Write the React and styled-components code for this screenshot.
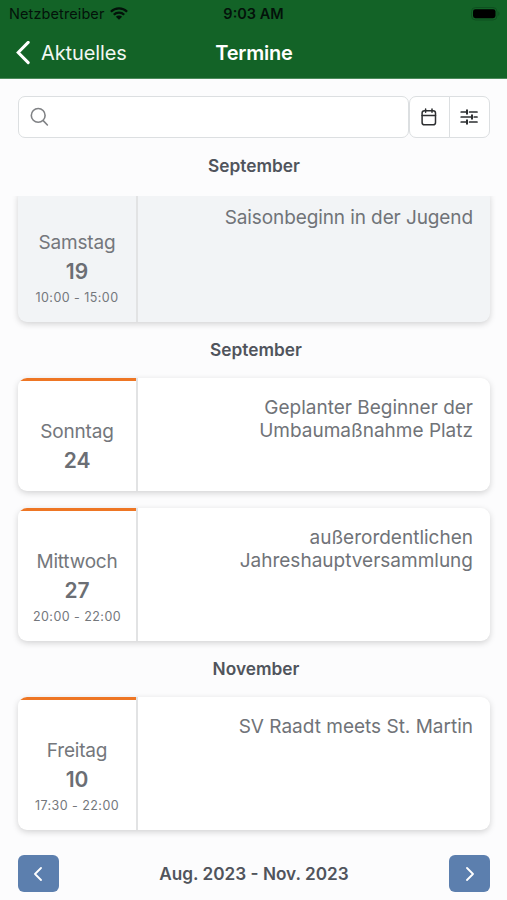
import styled, { createGlobalStyle } from "styled-components";

const events = [
    {
        month: "September",
        items: [
            { weekday: "Samstag", day: "19", time: "10:00 - 15:00", title: "Saisonbeginn in der Jugend", past: true },
        ],
    },
    {
        month: "September",
        items: [
            { weekday: "Sonntag", day: "24", title: "Geplanter Beginner der Umbaumaßnahme Platz" },
            { weekday: "Mittwoch", day: "27", time: "20:00 - 22:00", title: "außerordentlichen Jahreshauptversammlung" },
        ],
    },
    {
        month: "November",
        items: [
            { weekday: "Freitag", day: "10", time: "17:30 - 22:00", title: "SV Raadt meets St. Martin" },
        ],
    },
];

const App = () => {
    return (
    <Screen>
        <GlobalStyle />
        <Header>
            <StatusBar>
                <Carrier>
                    Netzbetreiber
                    <WifiIcon />
                </Carrier>
                <Clock>9:03 AM</Clock>
                <BatteryIcon />
            </StatusBar>
            <NavBar>
                <Back>
                    <svg width="14" height="24" viewBox="0 0 14 24" fill="none" stroke="#fff" strokeWidth="3" strokeLinecap="round">
                        <path d="M12.2 1.4 2.2 11.500l10 10.100" />
                    </svg>
                    Aktuelles
                </Back>
                <Title>Termine</Title>
            </NavBar>
        </Header>

        <Toolbar>
            <Search>
                <svg width="20" height="20" viewBox="0 0 20 20" fill="none" stroke="#808285" strokeWidth="1.6" strokeLinecap="round">
                    <circle cx="8.2" cy="8.4" r="6.9" />
                    <path d="m13.2 13.6 4.2 4.4" />
                </svg>
                <SearchInput type="text" aria-label="Suche" />
            </Search>
            <ToolButton aria-label="Kalender">
                <CalendarIcon />
            </ToolButton>
            <ToolButton $last aria-label="Filter">
                <FilterIcon />
            </ToolButton>
        </Toolbar>

        {events.map((group, i) => (
            <Group key={i}>
                <Month $sticky={i === 0}>{group.month}</Month>
                <Cards>
                    {group.items.map((item) => (
                        <Card key={item.day} $past={item.past}>
                            <DateCol $past={item.past}>
                                <Weekday>{item.weekday}</Weekday>
                                <Day>{item.day}</Day>
                                {item.time && <Time>{item.time}</Time>}
                            </DateCol>
                            <Info>
                                <EventTitle $past={item.past}>{item.title}</EventTitle>
                            </Info>
                        </Card>
                    ))}
                </Cards>
            </Group>
        ))}

        <Footer>
            <PageButton aria-label="Zurück">
                <svg width="8" height="14" viewBox="0 0 8 14" fill="none" stroke="#fff" strokeWidth="1.8" strokeLinecap="round" strokeLinejoin="round">
                    <path d="M7 1 1 7l6 6" />
                </svg>
            </PageButton>
            <Range>Aug. 2023 - Nov. 2023</Range>
            <PageButton $next aria-label="Weiter">
                <svg width="8" height="14" viewBox="0 0 8 14" fill="none" stroke="#fff" strokeWidth="1.8" strokeLinecap="round" strokeLinejoin="round">
                    <path d="m1 1 6 6-6 6" />
                </svg>
            </PageButton>
        </Footer>
    </Screen>
    );
}

const WifiIcon = () => (
    <svg width="18" height="13" viewBox="0 0 18 13" fill="none" stroke="#03120a" strokeWidth="2.3">
        <path d="M.9 4.7a11.6 11.6 0 0 1 16.2 0" />
        <path d="M3.8 7.8a7.4 7.4 0 0 1 10.4 0" />
        <path d="M9 12.7 5.9 9.7a4.4 4.4 0 0 1 6.2 0z" fill="#03120a" stroke="none" />
    </svg>
)

const BatteryIcon = () => (
    <svg width="29" height="14" viewBox="0 0 29 14">
        <rect x=".5" y=".5" width="25.5" height="12.5" rx="4" fill="none" stroke="#0e5120" />
        <rect x="2" y="2.2" width="22.5" height="9" rx="2.4" fill="#000" />
        <path d="M27.3 4.6c1.5.7 1.5 3.6 0 4.3z" fill="#0e5120" />
    </svg>
)

const CalendarIcon = () => (
    <svg width="16" height="18" viewBox="0 0 16 18" fill="none" stroke="#2d2f31" strokeWidth="1.5" strokeLinecap="round">
        <rect x="1.1" y="2.7" width="13.4" height="14.1" rx="2.4" />
        <path d="M1.1 7.5h13.4M4.6.9v3.4M11 .9v3.4" />
    </svg>
)

const FilterIcon = () => (
    <svg width="18" height="16" viewBox="0 0 18 16" fill="none" stroke="#2d2f31" strokeWidth="1.7" strokeLinecap="round">
        <path d="M1.2 3h5.4M9.6 3H17M1.2 8h10.2M14.2 8H17M1.2 13h5.4M9.6 13H17" />
        <path d="M7 1.3v3.4M12 6.3v3.4M7 11.3v3.4" strokeWidth="2" />
    </svg>
)

const GlobalStyle = createGlobalStyle`
* {
box-sizing: border-box;
}
body {
margin: 0;
background: #fcfcfd;
font-family: Inter, "Liberation Sans", sans-serif;
}
`;
const Screen = styled.div`
display: flex;
flex-direction: column;
width: 507px;
height: 900px;
overflow: hidden;
background: #fcfcfd;
`;
const Header = styled.header`
height: 79px;
flex: none;
background: #136327;
border-bottom: 1px solid #4c8a5b;
`;
const StatusBar = styled.div`
display: grid;
grid-template-columns: 1fr auto 1fr;
align-items: center;
height: 27px;
padding: 0 7px 0 9px;
color: #03120a;
font-size: 14.5px;

> :last-child {
    justify-self: end;
}
`;
const Carrier = styled.div`
display: flex;
align-items: center;
gap: 6px;
letter-spacing: 0.1px;
`;
const Clock = styled.div`
margin-right: 2px;
font-size: 14.5px;
font-weight: 600;
`;
const NavBar = styled.div`
display: grid;
grid-template-columns: 1fr auto 1fr;
align-items: center;
height: 51px;
padding: 0 17px 0 16px;
color: #fff;
`;
const Back = styled.a`
display: flex;
align-items: center;
gap: 11px;
font-size: 20px;
letter-spacing: -0.1px;
color: #f2f8f2;
`;
const Title = styled.h1`
margin: 0 0 0 2px;
font-size: 20px;
font-weight: 600;
letter-spacing: -0.2px;
`;
const Toolbar = styled.div`
display: flex;
flex: none;
height: 42px;
margin: 17px 17px 0 18px;
`;
const Search = styled.label`
display: flex;
align-items: center;
flex: 1;
padding-left: 11px;
border: 1.5px solid #dcdfe1;
border-radius: 7px;
background: #fff;
`;
const SearchInput = styled.input`
flex: 1;
min-width: 0;
border: 0;
outline: 0;
background: none;
font: inherit;
`;
const ToolButton = styled.button`
display: flex;
align-items: center;
justify-content: center;
width: 41px;
padding: 0 ${(props) => (props.$last ? "2px" : "1px")} 0 0;
margin-left: ${(props) => (props.$last ? "-1px" : "0")};
border: 1.5px solid #dcdfe1;
border-radius: ${(props) => (props.$last ? "0 7px 7px 0" : "7px 0 0 7px")};
background: #fff;
`;
const Group = styled.section`
flex: none;
`;
const Month = styled.h2`
display: flex;
align-items: center;
justify-content: center;
height: 56px;
margin: 0;
padding: 0 0 1px ${(props) => (props.$sticky ? "1px" : "5px")};
font-size: 17.3px;
font-weight: 600;
color: #50545c;
`;
const Cards = styled.div`
display: flex;
flex-direction: column;
gap: 17px;
padding: 0 17px 0 18px;
`;
// past entries are scrolled slightly under the sticky month label
const Card = styled.article`
display: flex;
min-height: 113px;
margin-top: ${(props) => (props.$past ? "-5px" : "0")};
border-radius: 9px;
background: ${(props) => (props.$past ? "#f2f4f6" : "#fff")};
box-shadow: 0 2px 6px rgba(0, 0, 0, 0.17);
clip-path: ${(props) => (props.$past ? "inset(7px -16px -16px)" : "none")};
overflow: hidden;
`;
const DateCol = styled.div`
display: flex;
flex-direction: column;
align-items: center;
width: 118px;
padding: 36px 0 12px;
border-top: 3px solid ${(props) => (props.$past ? "transparent" : "#ee7624")};
color: #74777c;
`;
const Weekday = styled.div`
font-size: 19px;
line-height: 29px;
letter-spacing: -0.2px;
`;
const Day = styled.div`
font-size: 21px;
font-weight: 600;
line-height: 29px;
color: #6b6e74;
`;
const Time = styled.div`
font-size: 12.5px;
line-height: 24px;
letter-spacing: 0.45px;
`;
const Info = styled.div`
flex: 1;
padding: 18px 17px 0 70px;
border-left: 2px solid #e2e3e4;
text-align: right;
`;
const EventTitle = styled.p`
margin: ${(props) => (props.$past ? "-1px 0 0" : "0")};
font-size: 19px;
line-height: 23px;
letter-spacing: ${(props) => (props.$past ? "-0.1px" : "0")};
color: #707378;
`;
const Footer = styled.footer`
display: flex;
align-items: center;
justify-content: space-between;
margin: 25px 17px 0 18px;
`;
const PageButton = styled.button`
display: flex;
align-items: center;
justify-content: center;
width: 41px;
height: 37px;
padding: ${(props) => (props.$next ? "0 0 0 1px" : "0 2px 0 0")};
border: 0;
border-radius: 6px;
background: #5c7fae;
`;
const Range = styled.div`
font-size: 17.2px;
font-weight: 600;
color: #50545c;
`;
export default App
